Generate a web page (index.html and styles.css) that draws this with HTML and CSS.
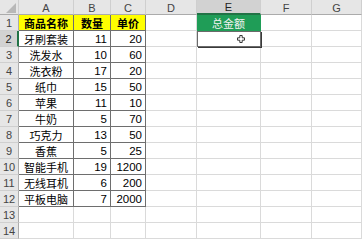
FILE: index.html
```html
<!DOCTYPE html>
<html lang="zh">
<head>
<meta charset="utf-8">
<link rel="stylesheet" href="styles.css">
</head>
<body>
<div class="sheet">
  <div class="hd corner"><svg width="18" height="15" viewBox="0 0 18 15"><polygon points="16,3 16,13 6,13" fill="#b8b8b8"/></svg></div>
  <div class="hd">A</div><div class="hd">B</div><div class="hd">C</div><div class="hd">D</div><div class="hd sel">E</div><div class="hd">F</div><div class="hd">G</div>

  <div class="rh">1</div><div class="c t y b ctr">商品名称</div><div class="c t y b ctr">数量</div><div class="c t y b ctr">单价</div><div class="c"></div><div class="c green ctr">总金额</div><div class="c"></div><div class="c"></div>

  <div class="rh rsel">2</div><div class="c t ctr">牙刷套装</div><div class="c t num">11</div><div class="c t num">20</div><div class="c"></div><div class="c active"><svg class="cursor" width="8" height="8" viewBox="0 0 8 8"><path d="M2.8 0.5h2.4v2.3h2.3v2.4h-2.3v2.3h-2.4v-2.3h-2.3v-2.4h2.3z" fill="#fff" stroke="#222" stroke-width="0.9"/></svg></div><div class="c"></div><div class="c"></div>

  <div class="rh">3</div><div class="c t ctr">洗发水</div><div class="c t num">10</div><div class="c t num">60</div><div class="c"></div><div class="c"></div><div class="c"></div><div class="c"></div>
  <div class="rh">4</div><div class="c t ctr">洗衣粉</div><div class="c t num">17</div><div class="c t num">20</div><div class="c"></div><div class="c"></div><div class="c"></div><div class="c"></div>
  <div class="rh">5</div><div class="c t ctr">纸巾</div><div class="c t num">15</div><div class="c t num">50</div><div class="c"></div><div class="c"></div><div class="c"></div><div class="c"></div>
  <div class="rh">6</div><div class="c t ctr">苹果</div><div class="c t num">11</div><div class="c t num">10</div><div class="c"></div><div class="c"></div><div class="c"></div><div class="c"></div>
  <div class="rh">7</div><div class="c t ctr">牛奶</div><div class="c t num">5</div><div class="c t num">70</div><div class="c"></div><div class="c"></div><div class="c"></div><div class="c"></div>
  <div class="rh">8</div><div class="c t ctr">巧克力</div><div class="c t num">13</div><div class="c t num">50</div><div class="c"></div><div class="c"></div><div class="c"></div><div class="c"></div>
  <div class="rh">9</div><div class="c t ctr">香蕉</div><div class="c t num">5</div><div class="c t num">25</div><div class="c"></div><div class="c"></div><div class="c"></div><div class="c"></div>
  <div class="rh">10</div><div class="c t ctr">智能手机</div><div class="c t num">19</div><div class="c t num">1200</div><div class="c"></div><div class="c"></div><div class="c"></div><div class="c"></div>
  <div class="rh">11</div><div class="c t ctr">无线耳机</div><div class="c t num">6</div><div class="c t num">200</div><div class="c"></div><div class="c"></div><div class="c"></div><div class="c"></div>
  <div class="rh">12</div><div class="c t ctr">平板电脑</div><div class="c t num">7</div><div class="c t num">2000</div><div class="c"></div><div class="c"></div><div class="c"></div><div class="c"></div>
  <div class="rh">13</div><div class="c"></div><div class="c"></div><div class="c"></div><div class="c"></div><div class="c"></div><div class="c"></div><div class="c"></div>
  <div class="rh">14</div><div class="c"></div><div class="c"></div><div class="c"></div><div class="c"></div><div class="c"></div><div class="c"></div><div class="c"></div>
</div>
</body>
</html>
```
FILE: styles.css
```css
html, body {
  margin: 0;
  padding: 0;
  background: #ffffff;
  overflow: hidden;
}
.sheet {
  display: grid;
  grid-template-columns: 19px 55px 37px 35px 51px 64px 51px 50px;
  grid-template-rows: 15px;
  grid-auto-rows: 16px;
  width: 362px;
  font-family: "Liberation Sans", "Noto Sans CJK SC", sans-serif;
  font-size: 11px;
  color: #000;
}
.sheet > div {
  box-sizing: border-box;
  display: flex;
  align-items: center;
  overflow: hidden;
  white-space: nowrap;
}
.hd {
  background: #e6e6e6;
  border-right: 1px solid #cfcfcf;
  border-bottom: 1px solid #ababab;
  justify-content: center;
  color: #444;
  font-size: 11px;
  padding-top: 1px;
}
.hd.corner {
  padding: 0;
  align-items: stretch;
}
.hd.sel {
  background: #d2d2d2;
  border-bottom: 2px solid #217346;
  color: #222;
}
.rh {
  background: #e6e6e6;
  border-right: 1px solid #ababab;
  border-bottom: 1px solid #cfcfcf;
  justify-content: center;
  color: #444;
  font-size: 11px;
}
.rh.rsel {
  background: #d2d2d2;
  border-right: 2px solid #217346;
  color: #222;
}
.c {
  border-right: 1px solid #dadada;
  border-bottom: 1px solid #dadada;
  padding: 0 3px;
}
.c.t {
  border-right-color: #6e6e6e;
  border-bottom-color: #6e6e6e;
}
.y {
  background: #ffff00;
}
.b {
  font-weight: bold;
}
.ctr {
  justify-content: center;
}
.num {
  justify-content: flex-end;
  font-size: 11.5px;
}
.green {
  background: #1f9d57;
  color: #f2f2f2;
  border-right-color: #1f9d57;
  border-bottom-color: #1f9d57;
}
.active {
  position: relative;
  outline: 1px solid #6a6a6a;
  outline-offset: -1px;
  box-shadow: 1px 1px 0 #3a3a3a;
  z-index: 1;
}
.cursor {
  position: absolute;
  left: 40px;
  top: 4px;
}
```
